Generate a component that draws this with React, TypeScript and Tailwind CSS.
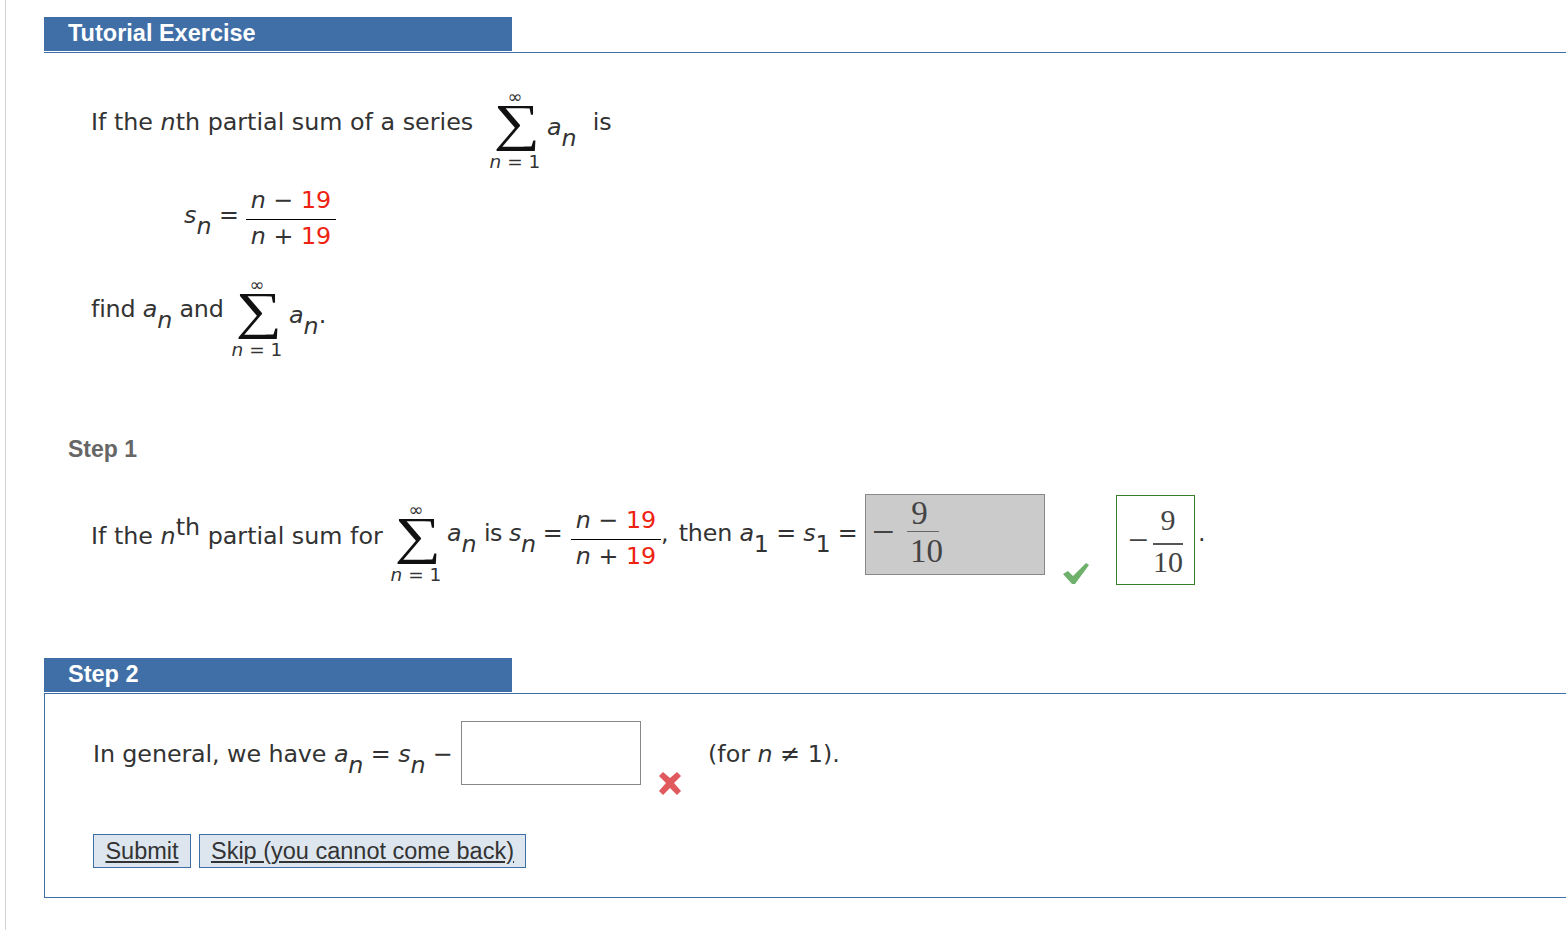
const sans = "font-['DejaVu_Sans',sans-serif]";
const arial = "font-['Liberation_Sans',Arial,sans-serif]";

function Sub({ children, upright }: { children: string; upright?: boolean }) {
  return <span className={`align-[-11px] leading-none ${upright ? "" : "italic"}`}>{children}</span>;
}

function Sigma() {
  return (
    <span className="inline-flex w-[52px] flex-col items-center text-[#333]">
      <span className="h-[14px] text-[18px] leading-[14px]">∞</span>
      <span className="flex h-[48px] scale-x-[1.25] items-start pl-[3px] font-['Liberation_Serif',serif] text-[52px] leading-[38px] text-[#111]">∑</span>
      <span className="whitespace-nowrap text-[18.5px] leading-[20px]">
        <i>n</i> = 1
      </span>
    </span>
  );
}

function Frac() {
  return (
    <span className="inline-flex w-[90px] flex-col items-center leading-[30px]">
      <span className="h-[34px] whitespace-nowrap">
        <i>n</i> − <span className="text-[#ee2211]">19</span>
      </span>
      <span className="h-[35px] w-full border-t border-black pt-[1px] text-center whitespace-nowrap">
        <i>n</i> + <span className="text-[#ee2211]">19</span>
      </span>
    </span>
  );
}

function Answer({ thick }: { thick?: boolean }) {
  if (thick) {
    return (
      <span className="inline-flex w-[30px] flex-col items-center font-['Liberation_Serif',serif] text-[30px] text-[#444]">
        <span className="h-[41px] leading-[36px]">9</span>
        <span className="w-full border-t-2 border-[#555] text-center leading-[34px]">10</span>
      </span>
    );
  }
  return (
    <span className="inline-flex w-[32px] flex-col font-['Liberation_Serif',serif] text-[33px] text-[#444]">
      <span className="h-[35px] pr-[7px] text-center leading-[34px]">9</span>
      <span className="border-t border-[#666] pl-[3px] text-center leading-[38px]">10</span>
    </span>
  );
}

function Header({ title, line }: { title: string; line?: boolean }) {
  return (
    <div className={line ? "border-b border-[#3e6ea6] pb-[1px]" : ""}>
      <div className={`h-[34px] w-[468px] bg-[#406fa7] pl-[24px] text-[23.5px] leading-[32px] font-bold text-white ${arial}`}>
        {title}
      </div>
    </div>
  );
}

export default function App() {
  return (
    <div className={`h-[930px] overflow-hidden bg-white pl-[5px] text-[23.8px] text-[#333] ${sans}`}>
      <div className="h-full border-l border-[#d4d4d4] pt-[17px] pl-[38px]">
        <Header title="Tutorial Exercise" line />

        {/* Question */}
        <div className="pl-[47px]">
          <div className="mt-[37px] flex h-[84px] items-start">
            <span className="mt-[15px] w-[398px] whitespace-nowrap">
              If the <i>n</i>th partial sum of a series
            </span>
            <Sigma />
            <span className="mt-[20px] ml-[6px] whitespace-nowrap">
              <i>a</i>
              <Sub>n</Sub>
            </span>
            <span className="mt-[15px] ml-[16px]">is</span>
          </div>

          <div className="mt-[11px] ml-[93px] flex h-[68px] items-start">
            <span className="mt-[13px] w-[62px] whitespace-nowrap">
              <i>s</i>
              <Sub>n</Sub> =
            </span>
            <Frac />
          </div>

          <div className="mt-[25px] flex h-[84px] items-start">
            <span className="mt-[14px] w-[140px] whitespace-nowrap tracking-[-0.2px]">
              find <i>a</i>
              <Sub>n</Sub> and
            </span>
            <Sigma />
            <span className="mt-[20px] ml-[6px] whitespace-nowrap">
              <i>a</i>
              <Sub>n</Sub>.
            </span>
          </div>
        </div>

        {/* Step 1 */}
        <div className={`mt-[73px] pl-[24px] text-[23px] leading-[28px] font-bold text-[#666] ${arial}`}>Step 1</div>

        <div className="mt-[31px] flex h-[91px] items-start pl-[47px]">
          <span className="mt-[22px] w-[299px] whitespace-nowrap">
            If the <i>n</i>
            <span className="align-[9px] leading-none">th</span> partial sum for
          </span>
          <span className="-mt-[3px]">
            <Sigma />
          </span>
          <span className="mt-[22px] ml-[5px] w-[37px] whitespace-nowrap">
            <i>a</i>
            <Sub>n</Sub>
          </span>
          <span className="mt-[22px] w-[87px] whitespace-nowrap tracking-[-0.5px]">
            is <i>s</i>
            <Sub>n</Sub> =
          </span>
          <span className="mt-[9px]">
            <Frac />
          </span>
          <span className="mt-[22px] w-[204px] whitespace-nowrap tracking-[-0.2px]">
            <span className="mr-[3px]">,</span> then <i>a</i>
            <Sub upright>1</Sub> = <i>s</i>
            <Sub upright>1</Sub> =
          </span>
          <span className="flex h-[81px] w-[180px] items-start border border-[#888] bg-[#cbcbcb] pt-[1px] pl-[6px]">
            <span className="mb-[6px] w-[35px] self-center font-['Liberation_Serif',serif] text-[40px] leading-none text-[#444]">−</span>
            <Answer />
          </span>
          <svg className="mt-[67px] ml-[16px] h-[24px] w-[30px]" viewBox="0 0 30 24">
            <path d="M2 13l5-3 5 5L25 2l3 2-14 19h-3z" fill="#6fb06a" />
          </svg>
          <span className="mt-[1px] ml-[25px] flex h-[90px] w-[79px] items-center border border-[#3a7d2c] pl-[11px]">
            <span className="w-[25px] font-['Liberation_Serif',serif] text-[36px] leading-none text-[#444]">−</span>
            <Answer thick />
          </span>
          <span className="mt-[22px] ml-[3px]">.</span>
        </div>

        {/* Step 2 */}
        <div className="mt-[73px]">
          <Header title="Step 2" />
        </div>
        <div className="mt-[1px] h-[205px] border-y border-l border-[#3e6ea6] pt-[27px] pl-[48px]">
          <div className="flex h-[64px] items-start">
            <span className="mt-[16px] w-[368px] whitespace-nowrap tracking-[-0.1px]">
              In general, we have <i>a</i>
              <Sub>n</Sub> = <i>s</i>
              <Sub>n</Sub> −
            </span>
            <input className="h-[64px] w-[180px] border border-[#888] bg-white" />
            <svg className="mt-[49px] ml-[16px] h-[26px] w-[26px]" viewBox="0 0 26 26">
              <path d="M2 6l4-4 7 6 7-6 4 4-7 7 7 8-4 4-7-7-7 7-4-4 7-8z" fill="#e0595c" />
            </svg>
            <span className="mt-[16px] ml-[25px] whitespace-nowrap">
              (for <i>n</i> ≠ 1).
            </span>
          </div>
          <div className={`mt-[49px] flex gap-[8px] text-[23.5px] text-[#333] ${arial}`}>
            <button className="h-[34px] w-[98px] border border-[#3e6ea6] bg-[#dde6ef] leading-[32px] underline">Submit</button>
            <button className="h-[34px] w-[327px] border border-[#3e6ea6] bg-[#dde6ef] leading-[32px] underline">Skip (you cannot come back)</button>
          </div>
        </div>
      </div>
    </div>
  );
}
